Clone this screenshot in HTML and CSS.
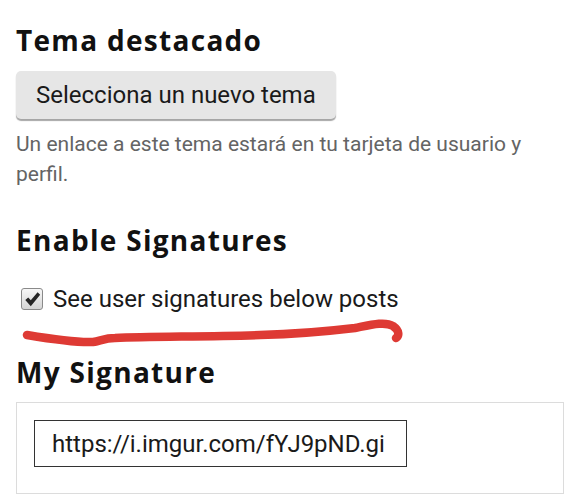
FILE: index.html
```html
<!DOCTYPE html>
<html lang="es">
<head>
    <meta charset="UTF-8">
    <meta name="viewport" content="width=device-width, initial-scale=1.0">
    <title>Preferencias - Perfil</title>
    <link rel="stylesheet" href="styles.css">
</head>
<body>

<div class="page">
    <div class="control-group">
        <h2 class="group-title">Tema destacado</h2>
        <button class="btn-default" type="button">Selecciona un nuevo tema</button>
        <p class="instructions">Un enlace a este tema estará en tu tarjeta de usuario y perfil.</p>
    </div>

    <div class="control-group signatures">
        <h2 class="group-title">Enable Signatures</h2>
        <label class="checkbox-label">
            <span class="fake-check">
                <svg viewBox="0 0 20 20" width="17" height="17">
                    <path d="M1.5 10.5 L5 7.5 L8 11 L16 1.5 L19 4.5 L8 18 Z" fill="#262626"/>
                </svg>
            </span>
            See user signatures below posts
        </label>

        <!-- trazo rojo hecho a mano sobre la captura -->
        <svg class="scribble" viewBox="0 0 420 60" width="420" height="60">
            <path d="M27 35 C45 38, 75 43, 93 42 C100 41, 105 38, 115 38 C150 36, 200 37, 260 35 C300 34, 330 31, 355 28 C370 25, 385 21, 393 26 C400 31, 399 36, 396 38"
                  fill="none" stroke="#de3a34" stroke-width="8.5" stroke-linecap="round" stroke-linejoin="round"/>
        </svg>
    </div>

    <div class="control-group">
        <h2 class="group-title">My Signature</h2>
        <div class="signature-box">
            <input class="signature-input" type="text" value="https://i.imgur.com/fYJ9pND.gi">
        </div>
    </div>
</div>

</body>
</html>
```

FILE: styles.css
```css
body {
    margin: 0;
    background-color: #fff;
    color: #222;
    font-family: 'Roboto', sans-serif;
}

.page {
    padding: 23px 16px 0 16px;
}

.group-title {
    font-family: 'Open Sans', sans-serif;
    font-weight: 700;
    font-size: 28px;
    line-height: 34px;
    letter-spacing: 1.3px;
    color: #111;
    margin: 0;
}

.control-group {
    position: relative;
}

.btn-default {
    display: inline-block;
    margin-top: 14px;
    height: 48px;
    padding: 0 20px;
    font-family: 'Roboto', sans-serif;
    font-size: 24px;
    color: #1a1a1a;
    background-color: #e6e6e6;
    border: none;
    border-radius: 5px;
    box-shadow: 0 2px 1px rgba(0, 0, 0, 0.35);
}

.instructions {
    margin: 10px 0 0 0;
    font-size: 21px;
    line-height: 30px;
    color: #646464;
}

.signatures {
    margin-top: 34px;
}

.checkbox-label {
    display: flex;
    align-items: center;
    gap: 10px;
    height: 28px;
    margin-top: 28px;
    font-size: 24px;
    line-height: 28px;
    color: #1a1a1a;
    padding-left: 5px;
}

.fake-check {
    width: 20px;
    height: 20px;
    border: 1px solid #8a8a8a;
    border-radius: 3px;
    background: linear-gradient(#f7f7f7, #d5d5d5);
    display: flex;
    align-items: center;
    justify-content: center;
}

.scribble {
    position: absolute;
    left: -16px;
    top: 77px;
}

.signatures + .control-group {
    margin-top: 42px;
}

.signature-box {
    margin-top: 13px;
    border: 1px solid #dcdcdc;
    padding: 17px 16px 26px 17px;
}

.signature-input {
    display: block;
    box-sizing: border-box;
    width: 373px;
    height: 47px;
    padding: 0 17px;
    border: 1px solid #333;
    border-radius: 0;
    font-family: 'Roboto', sans-serif;
    font-size: 24px;
    color: #1a1a1a;
    background: #fff;
}
```
